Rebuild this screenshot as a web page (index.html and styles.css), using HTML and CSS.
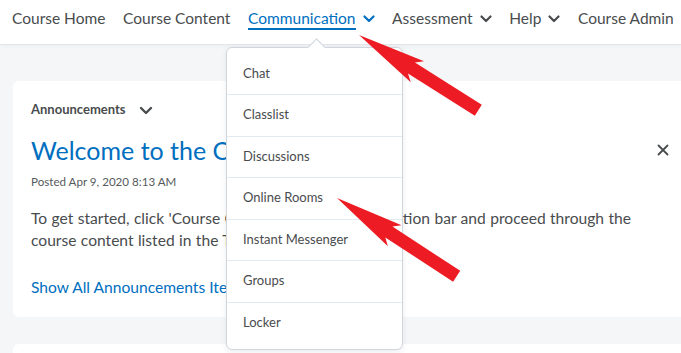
FILE: index.html
```html
<!DOCTYPE html>
<html lang="en">
<head>
    <meta charset="UTF-8">
    <title>Course Home</title>
    <link rel="stylesheet" href="styles.css">
</head>
<body>
    <nav class="navbar">
        <a class="nav-item">Course Home</a>
        <a class="nav-item">Course Content</a>
        <a class="nav-item active"><span class="nav-label">Communication</span>
            <svg class="chev" width="12" height="8" viewBox="0 0 12 8"><path d="M1.5 1.5 L6 6 L10.5 1.5" fill="none" stroke="currentColor" stroke-width="2.2" stroke-linecap="round" stroke-linejoin="round"/></svg>
        </a>
        <a class="nav-item">Assessment
            <svg class="chev" width="12" height="8" viewBox="0 0 12 8"><path d="M1.5 1.5 L6 6 L10.5 1.5" fill="none" stroke="currentColor" stroke-width="2.2" stroke-linecap="round" stroke-linejoin="round"/></svg>
        </a>
        <a class="nav-item">Help
            <svg class="chev" width="12" height="8" viewBox="0 0 12 8"><path d="M1.5 1.5 L6 6 L10.5 1.5" fill="none" stroke="currentColor" stroke-width="2.2" stroke-linecap="round" stroke-linejoin="round"/></svg>
        </a>
        <a class="nav-item">Course Admin</a>
    </nav>

    <main class="content">
        <section class="card">
            <div class="widget-head">
                <span class="widget-title">Announcements</span>
                <svg class="widget-chev" width="14" height="9" viewBox="0 0 14 9"><path d="M2 2 L7 7 L12 2" fill="none" stroke="#494c4e" stroke-width="2.4" stroke-linecap="round" stroke-linejoin="round"/></svg>
            </div>
            <div class="title-row">
                <h2 class="ann-title">Welcome to the Course!</h2>
                <svg class="close" width="12" height="12" viewBox="0 0 12 12"><path d="M1.5 1.5 L10.5 10.5 M10.5 1.5 L1.5 10.5" stroke="#494c4e" stroke-width="1.8" stroke-linecap="round"/></svg>
            </div>
            <div class="posted">Posted Apr 9, 2020 8:13 AM</div>
            <p class="ann-body">To get started, click 'Course Content' in the top navigation bar and proceed through the course content listed in the Table of Contents.</p>
            <a class="show-all">Show All Announcements Items</a>
        </section>
        <section class="card card-next"></section>
    </main>

    <div class="dropdown">
        <div class="pointer"></div>
        <div class="menu-item">Chat</div>
        <div class="menu-item">Classlist</div>
        <div class="menu-item">Discussions</div>
        <div class="menu-item">Online Rooms</div>
        <div class="menu-item">Instant Messenger</div>
        <div class="menu-item">Groups</div>
        <div class="menu-item">Locker</div>
    </div>

    <svg class="arrows" width="681" height="353" viewBox="0 0 681 353">
        <polygon transform="translate(359 35) rotate(32.2)" points="0,0 69,-12.5 62,-6.5 141,-6.5 141,6.5 62,6.5 69,12.5" fill="#ed1c24"/>
        <polygon transform="translate(337 198) rotate(33.2)" points="0,0 69,-12.5 62,-6.5 143,-6.5 143,6.5 62,6.5 69,12.5" fill="#ed1c24"/>
    </svg>
</body>
</html>
```

FILE: styles.css
```css
body {
    margin: 0;
    font-family: Lato, 'Open Sans', sans-serif;
    color: #494c4e;
    background-color: #f5f6f8;
    width: 681px;
    height: 353px;
    overflow: hidden;
    position: relative;
}
.navbar {
    display: flex;
    align-items: flex-start;
    height: 44px;
    padding-left: 12px;
    background-color: #ffffff;
    border-bottom: 1px solid #e3e7ec;
    box-shadow: 0 2px 4px rgba(0, 0, 0, 0.03);
    white-space: nowrap;
}
.nav-item {
    display: flex;
    align-items: center;
    font-size: 15.5px;
    line-height: 20px;
    padding-top: 8px;
    margin-right: 17.6px;
    color: #494c4e;
}
.nav-item .chev {
    margin-left: 7px;
    margin-top: 1px;
}
.nav-item.active {
    color: #006fbf;
}
.nav-label {
    display: inline-block;
    border-bottom: 2px solid #006fbf;
    margin-bottom: -2px;
}
.content {
    padding: 36px 0 0 13px;
}
.card {
    background-color: #ffffff;
    border-radius: 6px;
    margin-right: -20px;
    padding: 20px 21px 19px 18px;
}
.card-next {
    margin-top: 27px;
    height: 60px;
    padding: 0;
}
.widget-head {
    display: flex;
    align-items: center;
    height: 16px;
}
.widget-title {
    font-size: 13px;
    font-weight: bold;
    line-height: 16px;
}
.widget-chev {
    margin-left: 13px;
    margin-top: 2px;
}
.title-row {
    display: flex;
    justify-content: space-between;
    align-items: center;
    margin-top: 17px;
    height: 32px;
}
.ann-title {
    margin: 0;
    font-size: 25px;
    font-weight: normal;
    line-height: 32px;
    color: #006fbf;
}
.close {
    margin-right: 11px;
}
.posted {
    margin-top: 7px;
    font-size: 11.6px;
    line-height: 18px;
    color: #565a5c;
}
.ann-body {
    margin: 16px 0 0;
    max-width: 616px;
    font-size: 15.6px;
    line-height: 22px;
    word-spacing: 0.4px;
}
.show-all {
    display: block;
    margin-top: 25px;
    font-size: 15.6px;
    line-height: 22px;
    color: #006fbf;
}
.dropdown {
    position: absolute;
    left: 226px;
    top: 47px;
    width: 175px;
    padding: 5.5px 0 6px;
    background-color: #ffffff;
    border: 1px solid #cfd6de;
    border-radius: 6px;
    box-shadow: 0 2px 6px rgba(0, 0, 0, 0.08);
}
.pointer {
    position: absolute;
    left: 83px;
    top: -7px;
    width: 12px;
    height: 12px;
    background-color: #ffffff;
    border-left: 1px solid #cfd6de;
    border-top: 1px solid #cfd6de;
    transform: rotate(45deg);
}
.menu-item {
    position: relative;
    height: 40.5px;
    line-height: 38px;
    padding-left: 16px;
    font-size: 13px;
    color: #494c4e;
}
.menu-item + .menu-item {
    border-top: 1px solid #e3e9f1;
}
.arrows {
    position: absolute;
    left: 0;
    top: 0;
    pointer-events: none;
}
```
